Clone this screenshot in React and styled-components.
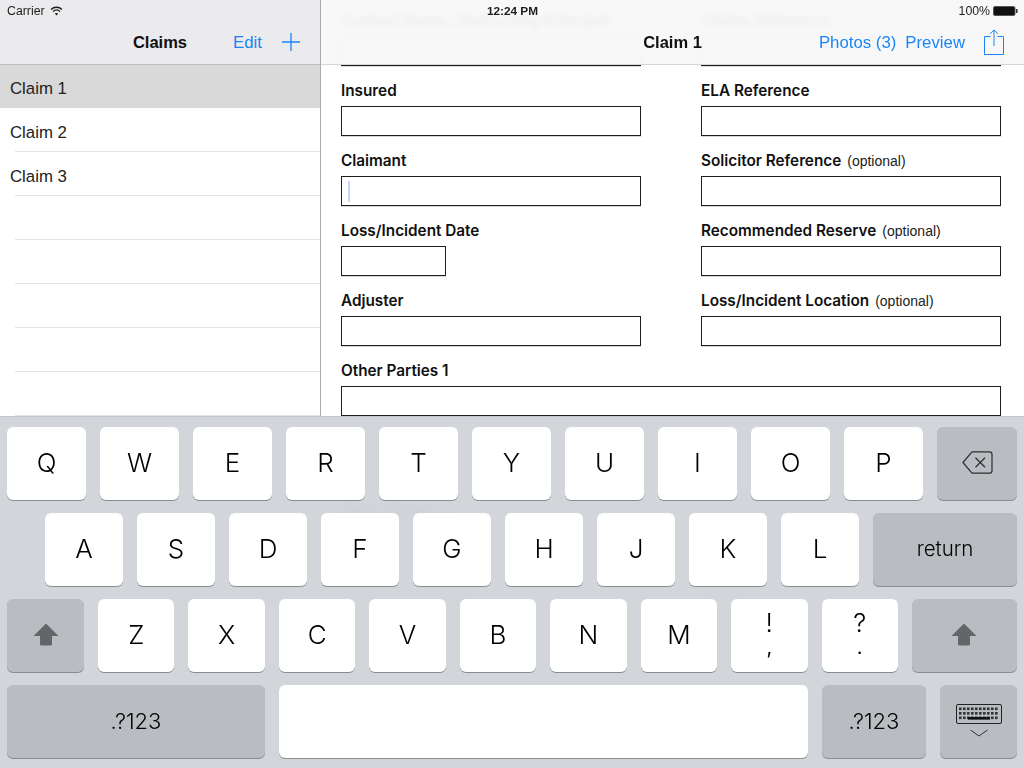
import React from 'react';
import styled, { createGlobalStyle } from 'styled-components';

const GlobalStyle = createGlobalStyle`
  html, body { margin: 0; padding: 0; background: #fff; }
  body { font-family: "Liberation Sans", Arial, sans-serif; color: #000; }
`;

const Screen = styled.div`
  position: relative;
  display: flex;
  width: 1024px;
  height: 768px;
  overflow: hidden;
  background: #fff;
`;

/* status bar */
const StatusBar = styled.div`
  position: absolute;
  top: 0;
  left: 0;
  right: 0;
  z-index: 5;
  display: grid;
  grid-template-columns: 1fr auto 1fr;
  align-items: center;
  height: 21px;
  padding: 0 6px 0 7px;
  font-size: 12.3px;
  color: #1c1c1c;
`;
const StatusLeft = styled.div`
  display: flex;
  align-items: center;
  gap: 5px;
`;
const Clock = styled.div`
  font-weight: 700;
  font-size: 11.8px;
`;
const StatusRight = styled.div`
  display: flex;
  align-items: center;
  justify-content: flex-end;
  gap: 3px;
`;

/* sidebar */
const Sidebar = styled.div`
  width: 320px;
  flex-shrink: 0;
  border-right: 1px solid #aaaaae;
`;
const SideNav = styled.div`
  display: grid;
  grid-template-columns: 1fr auto 1fr;
  align-items: center;
  box-sizing: border-box;
  height: 65px;
  padding-top: 20px;
  background: #ebebed;
  border-bottom: 1px solid #bcbcbe;
`;
const NavTitle = styled.div`
  grid-column: 2;
  font-size: 16.5px;
  font-weight: 700;
  color: #111;
`;
const NavActions = styled.div`
  display: flex;
  align-items: center;
  justify-content: flex-end;
  gap: ${p => p.$gap}px;
  padding-right: 20px;
`;
const NavLink = styled.span`
  padding-top: 1px;
  font-size: 16.8px;
  color: #1a85f9;
`;
const Row = styled.div`
  display: flex;
  align-items: center;
  box-sizing: border-box;
  height: ${p => (p.$selected ? 43 : 44)}px;
  padding: 5px 0 0 10px;
  font-size: 16.8px;
  color: #222;
  background: ${p => (p.$selected ? '#d9d9d9' : '#fff')};
  position: relative;
  &::after {
    content: ${p => (p.$selected ? 'none' : '""')};
    position: absolute;
    left: 15px;
    right: 0;
    bottom: 0;
    height: 1px;
    background: #e4e4e6;
  }
`;

/* detail pane */
const Detail = styled.div`
  position: relative;
  flex: 1;
  overflow: hidden;
`;
const DetailNav = styled.div`
  position: absolute;
  top: 0;
  left: 0;
  right: 0;
  z-index: 2;
  display: grid;
  grid-template-columns: 1fr auto 1fr;
  align-items: center;
  box-sizing: border-box;
  height: 65px;
  padding-top: 20px;
  background: rgba(248, 248, 248, 0.95);
  backdrop-filter: blur(3px);
  border-bottom: 1px solid #d6d6d8;
`;
const Form = styled.div`
  display: grid;
  grid-template-columns: 300px 300px;
  column-gap: 60px;
  row-gap: 10px;
  padding: 6px 0 0 20px;
`;
const Field = styled.div`
  grid-column: ${p => (p.$wide ? '1 / -1' : 'auto')};
`;
const Label = styled.div`
  display: flex;
  align-items: center;
  box-sizing: border-box;
  height: 30px;
  padding-bottom: 2px;
  font-family: Inter, "Liberation Sans", sans-serif;
  font-size: 15.3px;
  font-weight: 600;
  color: #111;
  white-space: nowrap;
`;
const Optional = styled.span`
  margin-left: 6px;
  padding-top: 2px;
  font-family: "Liberation Sans", Arial, sans-serif;
  font-size: 14px;
  font-weight: 400;
  color: #222;
`;
const Box = styled.div`
  display: flex;
  align-items: center;
  box-sizing: border-box;
  width: ${p => p.$width || '100%'};
  height: 30px;
  padding-left: 6px;
  border: 1px solid #1e1e1e;
  box-shadow: 0 1px 0 #d8d8d8;
  background: #fff;
`;
const Caret = styled.div`
  width: 2px;
  height: 21px;
  background: #c9d2fb;
`;

/* keyboard */
const Keyboard = styled.div`
  position: absolute;
  left: 0;
  right: 0;
  bottom: 0;
  z-index: 3;
  display: flex;
  flex-direction: column;
  gap: 12px;
  box-sizing: border-box;
  height: 352px;
  padding: 10px 7px 0;
  background: rgba(209, 213, 217, 0.97);
  backdrop-filter: blur(4px);
  border-top: 1px solid #c6c9cc;
`;
const KeyRow = styled.div`
  display: flex;
  gap: 14px;
  height: 74px;
  padding-left: ${p => p.$indent || 0}px;
`;
const Key = styled.div`
  display: flex;
  flex-direction: column;
  align-items: center;
  justify-content: center;
  box-sizing: border-box;
  width: ${p => p.$w}px;
  flex: ${p => (p.$grow ? '1' : '0 0 auto')};
  height: 73px;
  padding-bottom: 2px;
  border-radius: 6px;
  background: ${p => (p.$fn ? '#b9bcc0' : '#fff')};
  box-shadow: 0 1px 0 #8b8c8f;
  font-family: Inter, "Liberation Sans", sans-serif;
  font-weight: 300;
  font-size: ${p => p.$size || 26}px;
  color: #000;
`;
const PunctTop = styled.span`
  font-size: 26px;
  line-height: 24px;
`;
const PunctBottom = styled.span`
  margin: 4px 0 4px;
  font-size: 20px;
  font-weight: 400;
  line-height: 16px;
`;

const WifiIcon = () => (
  <svg width="13" height="10" viewBox="0 0 14 11" fill="none" stroke="#1c1c1c" strokeWidth="1.5">
    <path d="M1 3.8 C4.4 .6 9.6 .6 13 3.8" />
    <path d="M3.2 6 C5.4 4 8.6 4 10.8 6" />
    <path d="M7 10.4 L5.2 8.2 C6.2 7.4 7.8 7.4 8.8 8.2 Z" fill="#1c1c1c" stroke="none" />
  </svg>
);

const BatteryIcon = () => (
  <svg width="25" height="10" viewBox="0 0 25 10">
    <rect x="0.5" y="0.5" width="21.5" height="9" rx="1.5" fill="#111" stroke="#555" />
    <rect x="23" y="3" width="1.5" height="4" fill="#333" />
  </svg>
);

const PlusIcon = () => (
  <svg width="18" height="18" viewBox="0 0 18 18" stroke="#1a85f9" strokeWidth="1.3">
    <path d="M9 0 V18 M0 9 H18" />
  </svg>
);

const ShareGlyph = styled.svg`
  margin-left: 10px;
`;

const ShareIcon = () => (
  <ShareGlyph width="20" height="26" viewBox="0 0 20 26" fill="none" stroke="#1a85f9" strokeWidth="1">
    <path d="M6.5 7.5 H0.5 V25.5 H19.5 V7.5 H13.5" />
    <path d="M10 17 V1 M6 4.8 L10 1 L14 4.8" />
  </ShareGlyph>
);

const BackspaceIcon = () => (
  <svg width="31" height="23" viewBox="0 0 31 23" fill="none" stroke="#2e2e2e" strokeWidth="1.2">
    <path d="M10 0.8 H27.5 a2.5 2.5 0 0 1 2.5 2.5 V19.7 a2.5 2.5 0 0 1 -2.5 2.5 H10 L1 11.5 Z" strokeLinejoin="round" />
    <path d="M13.5 6.8 L23 16.2 M23 6.8 L13.5 16.2" />
  </svg>
);

const ShiftIcon = () => (
  <svg width="26" height="23" viewBox="0 0 26 23" fill="#636568">
    <path d="M13 0.5 L25.5 13 H19 V21 a1.5 1.5 0 0 1 -1.5 1.5 H8.5 A1.5 1.5 0 0 1 7 21 V13 H0.5 Z" />
  </svg>
);

const KeyboardIcon = () => (
  <svg width="46" height="33" viewBox="0 0 46 33" fill="none">
    <rect x="0.5" y="0.5" width="45" height="19" rx="1.5" stroke="#222" />
    {[3.5, 8, 12.5].map(y =>
      [3, 7, 11, 15, 19, 23, 27, 31, 35, 39].map(x => (
        <rect key={`${x}-${y}`} x={x} y={y} width="2.6" height="2.6" fill="#333" />
      ))
    )}
    <rect x="12" y="13" width="22" height="2.6" fill="#111" />
    <path d="M14.5 26 L23 32 L31.5 26" stroke="#333" strokeWidth="1" />
  </svg>
);

const claims = ['Claim 1', 'Claim 2', 'Claim 3', '', '', '', '', ''];

const fields = [
  { label: 'Contact Name / Instructing Principal' },
  { label: 'Claims Reference' },
  { label: 'Insured' },
  { label: 'ELA Reference' },
  { label: 'Claimant', caret: true },
  { label: 'Solicitor Reference', optional: true },
  { label: 'Loss/Incident Date', width: '105px' },
  { label: 'Recommended Reserve', optional: true },
  { label: 'Adjuster' },
  { label: 'Loss/Incident Location', optional: true },
  { label: 'Other Parties 1', wide: true },
  { label: '', wide: true },
  { label: 'Other Parties 2', wide: true },
];

const rowOne = 'QWERTYUIOP'.split('');
const rowTwo = 'ASDFGHJKL'.split('');
const rowThree = 'ZXCVBNM'.split('');

const App = () => (
  <Screen>
    <GlobalStyle />
    <StatusBar>
      <StatusLeft>Carrier <WifiIcon /></StatusLeft>
      <Clock>12:24 PM</Clock>
      <StatusRight>100% <BatteryIcon /></StatusRight>
    </StatusBar>

    <Sidebar>
      <SideNav>
        <NavTitle>Claims</NavTitle>
        <NavActions $gap={20}>
          <NavLink>Edit</NavLink>
          <PlusIcon />
        </NavActions>
      </SideNav>
      {claims.map((name, i) => (
        <Row key={i} $selected={i === 0}>{name}</Row>
      ))}
    </Sidebar>

    <Detail>
      <DetailNav>
        <NavTitle>Claim 1</NavTitle>
        <NavActions $gap={9}>
          <NavLink>Photos (3)</NavLink>
          <NavLink>Preview</NavLink>
          <ShareIcon />
        </NavActions>
      </DetailNav>
      <Form>
        {fields.map((f, i) => (
          <Field key={i} $wide={f.wide}>
            <Label>
              {f.label}
              {f.optional && <Optional>(optional)</Optional>}
            </Label>
            <Box $width={f.width}>{f.caret && <Caret />}</Box>
          </Field>
        ))}
      </Form>
    </Detail>

    <Keyboard>
      <KeyRow>
        {rowOne.map(k => <Key key={k} $w={79}>{k}</Key>)}
        <Key $fn $grow><BackspaceIcon /></Key>
      </KeyRow>
      <KeyRow $indent={38}>
        {rowTwo.map(k => <Key key={k} $w={78}>{k}</Key>)}
        <Key $fn $grow $size={20.5}>return</Key>
      </KeyRow>
      <KeyRow>
        <Key $fn $w={77}><ShiftIcon /></Key>
        {rowThree.map(k => <Key key={k} $w={76.44}>{k}</Key>)}
        <Key $w={76.44}><PunctTop>!</PunctTop><PunctBottom>,</PunctBottom></Key>
        <Key $w={76.44}><PunctTop>?</PunctTop><PunctBottom>.</PunctBottom></Key>
        <Key $fn $grow><ShiftIcon /></Key>
      </KeyRow>
      <KeyRow>
        <Key $fn $w={258} $size={22}>.?123</Key>
        <Key $w={529} />
        <Key $fn $w={104} $size={22}>.?123</Key>
        <Key $fn $grow><KeyboardIcon /></Key>
      </KeyRow>
    </Keyboard>
  </Screen>
);

export default App;
